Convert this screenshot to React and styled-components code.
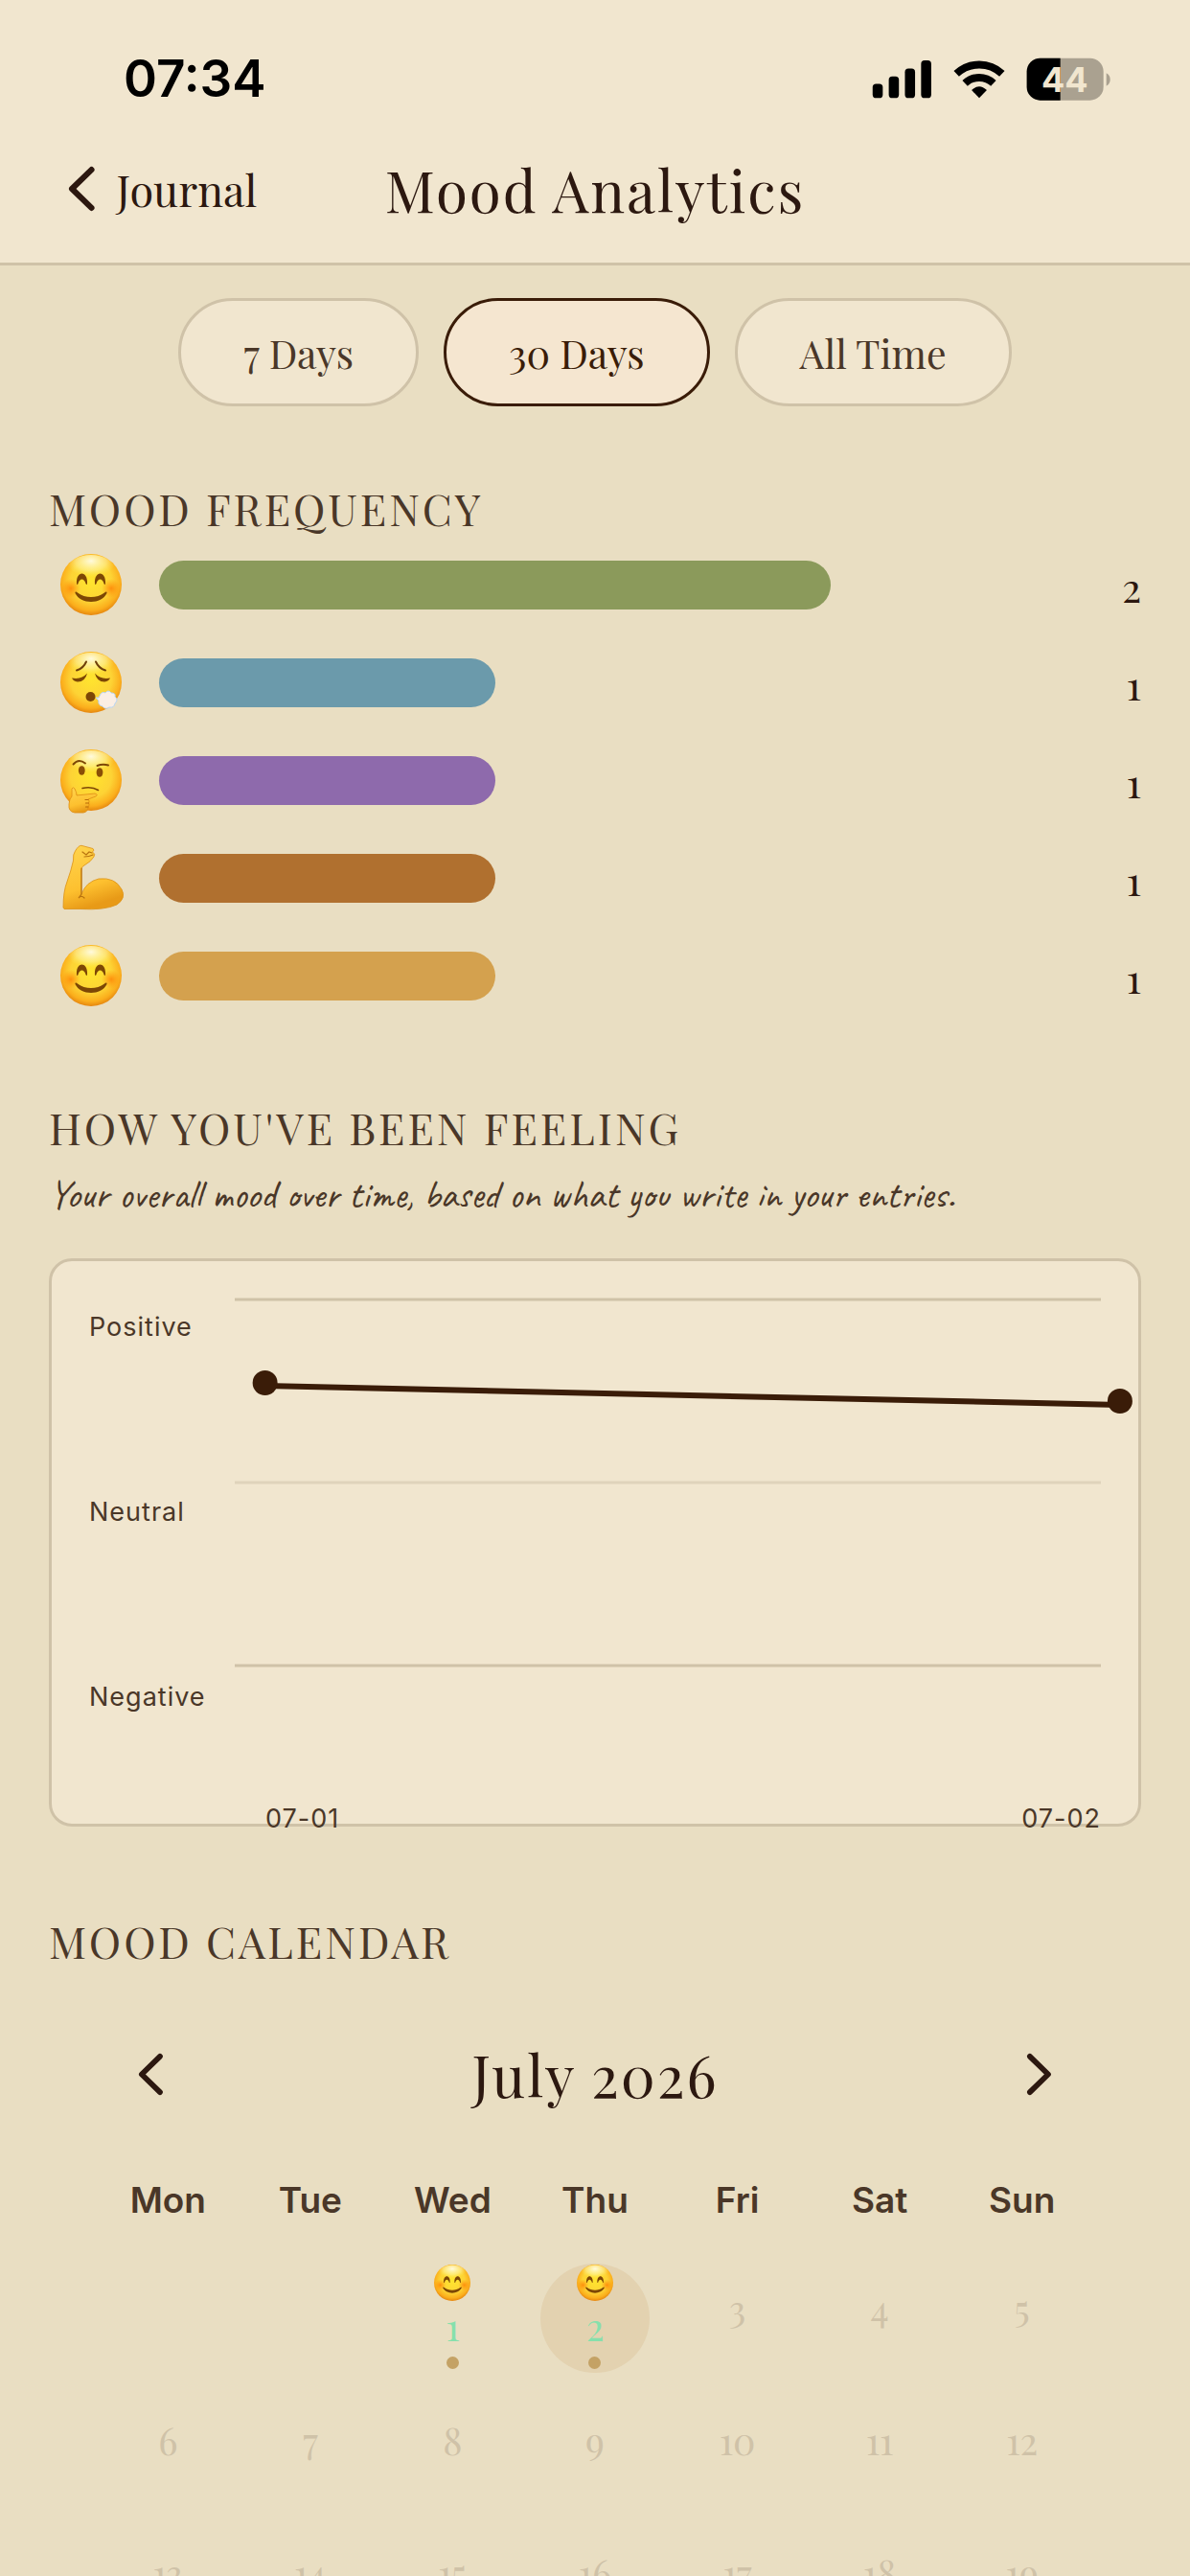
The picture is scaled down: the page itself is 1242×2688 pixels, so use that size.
import React, { useState } from "react"
import styled, { createGlobalStyle, css } from "styled-components"

const serif = `"Playfair Display", "Liberation Serif", serif`
const sans = `Inter, "Liberation Sans", sans-serif`

const colors = {
  page: "#e9dec2",
  surface: "#f1e6cf",
  selected: "#f5e6d0",
  border: "#cfc2a8",
  ink: "#2c1810",
  muted: "#4a3728",
  accent: "#3a1c08",
  today: "#e3d2b0",
  entry: "#86e0ac",
  dot: "#c4a265",
}

const GlobalStyle = createGlobalStyle`
  * {
    box-sizing: border-box;
  }

  body {
    margin: 0;
    background: ${colors.page};
    color: ${colors.ink};
    font-family: ${serif};
  }

  button {
    margin: 0;
    padding: 0;
    border: 0;
    background: none;
    color: inherit;
    font: inherit;
    cursor: pointer;
  }
`

const Screen = styled.div`
  display: flex;
  flex-direction: column;
  height: 100vh;
`

const Header = styled.header`
  flex: none;
  background: ${colors.surface};
  border-bottom: 3px solid ${colors.border};
`

const StatusBar = styled.div`
  display: flex;
  align-items: center;
  justify-content: space-between;
  padding: 54px 82px 0 129px;
  color: #000;
`

const Clock = styled.time`
  font: 600 53px/56px ${sans};
`

const StatusIcons = styled.div`
  display: flex;
  align-items: center;
  gap: 22px;
`

const Nav = styled.nav`
  display: grid;
  grid-template-columns: 1fr auto 1fr;
  align-items: center;
  padding: 47px 72px 37px;
`

const BackLink = styled.a`
  display: flex;
  align-items: center;
  gap: 23px;
  color: inherit;
  text-decoration: none;
  font-size: 45px;
  line-height: 60px;
`

const Title = styled.h1`
  margin: 0;
  font-size: 60px;
  font-weight: 400;
  line-height: 80px;
  letter-spacing: 2px;
`

const Content = styled.main`
  flex: 1;
  min-height: 0;
  padding: 34px 51px;
  overflow-y: auto;
  scrollbar-width: none;
`

const Ranges = styled.div`
  display: flex;
  justify-content: center;
  gap: 26px;
  margin-bottom: 76px;
`

const RangeButton = styled.button(
  ({ $active }) => css`
    height: 113px;
    padding: 0 65px;
    border: 3px solid ${$active ? colors.accent : colors.border};
    border-radius: 60px;
    background: ${$active ? colors.selected : colors.surface};
    color: ${$active ? colors.accent : colors.muted};
    font-size: 41px;
    line-height: 56px;
  `
)

const Section = styled.section`
  margin-bottom: 83px;
`

const SectionTitle = styled.h2`
  margin: 0 0 5px;
  color: ${colors.muted};
  font-size: 45px;
  font-weight: 400;
  line-height: 60px;
  letter-spacing: 3px;
  text-transform: uppercase;
`

const Subtitle = styled.p`
  margin: 17px 0 42px;
  color: ${colors.muted};
  font: 400 41px/48px Caveat, "Liberation Serif", serif;
`

const MoodList = styled.ul`
  display: grid;
  gap: 12px;
  margin: 0;
  padding: 0;
  list-style: none;
`

const MoodRow = styled.li`
  display: flex;
  align-items: center;
  height: 90px;
`

const MoodIcon = styled.span`
  display: flex;
  justify-content: center;
  width: 87px;
  margin-right: 28px;
`

const Track = styled.div`
  flex: 1;
`

const Bar = styled.div(
  ({ $color }) => css`
    height: 51px;
    border-radius: 26px;
    background: ${$color};
  `
)

const Count = styled.span`
  width: 90px;
  padding-top: 3px;
  font-size: 42px;
  line-height: 48px;
  text-align: right;
`

const ChartCard = styled.div`
  display: grid;
  grid-template-columns: 152px 1fr;
  grid-template-rows: 525px 36px;
  height: 593px;
  margin-bottom: 89px;
  padding: 39px;
  border: 3px solid ${colors.border};
  border-radius: 24px;
  background: ${colors.surface};
  color: ${colors.muted};
  font: 400 27px/36px ${sans};
  letter-spacing: 1px;
`

const AxisLabels = styled.div`
  display: grid;
  grid-auto-rows: 193px;
  padding-top: 12px;
`

const Plot = styled.svg`
  width: 100%;
  height: 100%;
  overflow: visible;
`

const Dates = styled.div`
  grid-column: 2;
  display: flex;
  justify-content: space-between;
  padding-left: 32px;
`

const Calendar = styled.div`
  padding: 64px 50px 0;
`

const MonthBar = styled.div`
  display: flex;
  align-items: center;
  justify-content: space-between;
  padding: 0 44px;
`

const Month = styled.h3`
  margin: 0;
  font-size: 60px;
  font-weight: 400;
  line-height: 80px;
  letter-spacing: 2px;
`

const Grid = styled.div`
  display: grid;
  grid-template-columns: repeat(7, 1fr);
  justify-items: center;
  row-gap: 24px;
`

const Weekdays = styled(Grid)`
  margin: 68px 0 42px;
  color: ${colors.muted};
  font: 600 37px/48px ${sans};
`

const Day = styled.button(
  ({ $entry, $today }) => css`
    display: flex;
    flex-direction: column;
    align-items: center;
    gap: 5px;
    width: 114px;
    height: 114px;
    padding-top: ${$entry ? 1 : 25}px;
    border-radius: 50%;
    background: ${$today ? colors.today : "transparent"};
    color: ${$entry ? colors.entry : colors.border};
    font-size: 39px;
    line-height: 42px;
  `
)

const EntryDot = styled.span`
  width: 13px;
  height: 13px;
  margin-top: 6px;
  border-radius: 50%;
  background: ${colors.dot};
`

const Drawing = styled.svg`
  display: block;
  flex: none;
  overflow: visible;
`

function Chevron({ height, right }) {
  return (
    <Drawing width={(height * 26) / 45} height={height} viewBox="0 0 26 45">
      <path
        d={right ? "M3 3L23 22.5L3 42" : "M23 3L3 22.5L23 42"}
        fill="none"
        stroke="currentColor"
        strokeWidth="6"
        strokeLinecap="round"
        strokeLinejoin="round"
      />
    </Drawing>
  )
}

function Signal() {
  return (
    <Drawing width="63" height="41" viewBox="54 64 190 124">
      <rect x="56" y="141" width="32" height="45" rx="11" />
      <rect x="107" y="118" width="32" height="68" rx="11" />
      <rect x="158" y="93" width="32" height="93" rx="11" />
      <rect x="209" y="67" width="32" height="119" rx="11" />
    </Drawing>
  )
}

function Wifi() {
  return (
    <Drawing width="54" height="41" viewBox="311 64 162 124">
      <path
        d="M320 109A105 105 0 0 1 464 109M347 139A66 66 0 0 1 437 139"
        fill="none"
        stroke="#000"
        strokeWidth="24"
      />
      <path d="M392 186L368 161Q392 138 416 161Z" />
    </Drawing>
  )
}

function Battery() {
  return (
    <Drawing width="89" height="45" viewBox="541 58 267 135">
      <clipPath id="charge">
        <rect x="540" y="58" width="108" height="140" />
      </clipPath>
      <rect x="543" y="60" width="240" height="132" rx="42" fill="#aaa190" />
      <rect x="543" y="60" width="240" height="132" rx="42" clipPath="url(#charge)" />
      <path d="M792 107Q804 113 804 127Q804 141 792 147Z" fill="#aaa190" />
      <text
        x="662"
        y="165"
        textAnchor="middle"
        fill={colors.surface}
        fontFamily="Inter, sans-serif"
        fontSize="108"
        fontWeight="700"
      >
        44
      </text>
    </Drawing>
  )
}

function EmojiDefs() {
  return (
    <defs>
      <radialGradient id="skin" cx="50%" cy="44%" r="56%">
        <stop offset="0" stopColor="#ffe52e" />
        <stop offset="0.6" stopColor="#fdd335" />
        <stop offset="0.86" stopColor="#fbae1c" />
        <stop offset="1" stopColor="#e5860f" />
      </radialGradient>
      <radialGradient id="shine" cx="50%" cy="20%" r="80%">
        <stop offset="0" stopColor="#fffef0" stopOpacity="0.9" />
        <stop offset="0.4" stopColor="#fffbb0" stopOpacity="0.5" />
        <stop offset="0.65" stopColor="#fff36b" stopOpacity="0" />
      </radialGradient>
      <radialGradient id="cheek">
        <stop offset="0" stopColor="#ff7a00" stopOpacity="0.75" />
        <stop offset="1" stopColor="#ff8a00" stopOpacity="0" />
      </radialGradient>
      <linearGradient id="hand" x1="0" y1="0" x2="0.3" y2="1">
        <stop offset="0" stopColor="#ffd54f" />
        <stop offset="0.7" stopColor="#fdc02f" />
        <stop offset="1" stopColor="#e89a17" />
      </linearGradient>
    </defs>
  )
}

function Face({ size, label, children }) {
  return (
    <Drawing width={size} height={size} viewBox="0 0 64 64" role="img" aria-label={label}>
      <circle cx="32" cy="32" r="32" fill="url(#skin)" />
      <ellipse cx="32" cy="17" rx="25" ry="16" fill="url(#shine)" />
      {children}
    </Drawing>
  )
}

function Smile({ size = 64 }) {
  return (
    <Face size={size} label="Happy">
      <circle cx="11" cy="36" r="10" fill="url(#cheek)" />
      <circle cx="53" cy="36" r="10" fill="url(#cheek)" />
      <g fill="#7d4705">
        <path d="M17 31C16 17 29 17 28 31Q27.500 33 26.500 31C25 25 20 25 18.500 31Q17.500 33 17 31Z" />
        <path d="M36 31C35 17 48 17 47 31Q46.500 33 45.500 31C44 25 39 25 37.500 31Q36.500 33 36 31Z" />
        <path d="M15.500 41C15 39.500 16.500 39 18 40.500C26 46.500 38 46.500 46 40.500C47.500 39 49 39.500 48.500 41C43 53 21 53 15.500 41Z" />
      </g>
    </Face>
  )
}

function Exhale() {
  return (
    <Face size={64} label="Relieved">
      <g fill="none" stroke="#70410a" strokeWidth="2" strokeLinecap="round">
        <path d="M17 19.500Q24 17.500 27 10.500" />
        <path d="M47 19.500Q40 17.500 37 10.500" />
      </g>
      <g fill="#7d4705">
        <path d="M12 27.500Q22 29.500 28 22.500Q26 31.500 18 31.500Q13.500 31 12 27.500Z" />
        <path d="M52 27.500Q42 29.500 36 22.500Q38 31.500 46 31.500Q50.500 31 52 27.500Z" />
        <circle cx="31.500" cy="47" r="5" />
      </g>
      <g fill="#fbeee3" stroke="#b9d6f5" strokeWidth="1">
        <path d="M37 48Q41 49 41 46Q43 41 47 43Q50 39 53 43Q58 43 57 47Q61 50 57 54Q56 59 51 58Q47 61 44 57Q39 56 40 51Z" />
      </g>
    </Face>
  )
}

function Thinking() {
  return (
    <Face size={64} label="Thoughtful">
      <g fill="none" stroke="#7d4705" strokeWidth="2" strokeLinecap="round">
        <path d="M13.500 15.500Q19 9 26 14.500" />
        <path d="M38.500 17Q44 15 50 16.500" />
        <path d="M23 40.500Q33 38.500 39.500 42.500" strokeWidth="1.500" />
      </g>
      <ellipse cx="22.300" cy="22" rx="3.400" ry="4.800" fill="#8a4f06" />
      <ellipse cx="41" cy="24" rx="3.400" ry="4.800" fill="#8a4f06" />
      <path
        d="M12 41Q13 38.500 15 41Q17 45 17 48L36 46Q40 47 37 49L29 52Q31 54 29.500 56Q31 58 29 60Q29 65 24 66H15Q8 65 9 57Q9.500 51 12 49Z"
        fill="url(#hand)"
        stroke="#dd8c13"
        strokeWidth="0.800"
      />
      <path
        d="M29 52.500H26M29.500 56H26.500M29 60H26.500"
        stroke="#b86a08"
        strokeWidth="1.200"
        strokeLinecap="round"
      />
    </Face>
  )
}

function Muscle() {
  return (
    <Drawing width={64} height={64} viewBox="0 0 64 64" role="img" aria-label="Strong">
      <path
        d="M3 63Q3 46 7 36Q11 25 13.500 14Q13 7 15.500 4Q19 -2 22 -1.700L34 1.500Q36 3 33.500 5Q37 7 35 10Q32 15 25 19Q22 20 22 24V49Q27 36 40 33Q57 31 64 44Q69 53 59 60Q46 66 21 64.500L4 64.500Z"
        fill="url(#hand)"
        stroke="#dc9216"
        strokeWidth="0.800"
      />
      <path
        d="M22 22V49L19 53Q22 50 25 53M23 5L27 8L30 5L33 6M25 10Q30 10 34 8"
        fill="none"
        stroke="#b8730f"
        strokeWidth="1.200"
        strokeLinecap="round"
      />
    </Drawing>
  )
}

const ranges = ["7 Days", "30 Days", "All Time"]

const moods = [
  { Icon: Smile, color: "#8b9a5b", count: 2 },
  { Icon: Exhale, color: "#6b9aab", count: 1 },
  { Icon: Thinking, color: "#8e6aac", count: 1 },
  { Icon: Muscle, color: "#b0702f", count: 1 },
  { Icon: Smile, color: "#d4a14e", count: 1 },
]

const weekdays = ["Mon", "Tue", "Wed", "Thu", "Fri", "Sat", "Sun"]
const days = Array.from({ length: 31 }, (_, i) => i + 1)
const entries = [1, 2]
const today = 2

// a single entry fills this share of the track
const BAR_STEP = 37.5

export default function App() {
  const [range, setRange] = useState("30 Days")

  return (
    <Screen>
      <GlobalStyle />
      <Header>
        <StatusBar>
          <Clock>07:34</Clock>
          <StatusIcons>
            <Signal />
            <Wifi />
            <Battery />
          </StatusIcons>
        </StatusBar>
        <Nav>
          <BackLink href="#journal">
            <Chevron height={46} />
            Journal
          </BackLink>
          <Title>Mood Analytics</Title>
        </Nav>
      </Header>

      <Content>
        <Ranges>
          {ranges.map((name) => (
            <RangeButton
              key={name}
              type="button"
              aria-pressed={name === range}
              $active={name === range}
              onClick={() => setRange(name)}
            >
              {name}
            </RangeButton>
          ))}
        </Ranges>

        <Section>
          <SectionTitle>Mood Frequency</SectionTitle>
          <MoodList>
            {moods.map(({ Icon, color, count }) => (
              <MoodRow key={color}>
                <MoodIcon>
                  <Icon />
                </MoodIcon>
                <Track>
                  <Bar $color={color} style={{ width: `${count * BAR_STEP}%` }} />
                </Track>
                <Count>{count}</Count>
              </MoodRow>
            ))}
          </MoodList>
        </Section>

        <Section>
          <SectionTitle>How you've been feeling</SectionTitle>
          <Subtitle>
            Your overall mood over time, based on what you write in your entries.
          </Subtitle>
          <ChartCard>
            <AxisLabels>
              <span>Positive</span>
              <span>Neutral</span>
              <span>Negative</span>
            </AxisLabels>
            <Plot>
              <g stroke={colors.border} strokeWidth="3">
                <line x1="0" y1="1" x2="100%" y2="1" />
                <line x1="0" y1="192" x2="100%" y2="192" opacity="0.5" />
                <line x1="0" y1="383" x2="100%" y2="383" />
              </g>
              <line
                x1="3.5%"
                y1="91"
                x2="102.2%"
                y2="111"
                stroke={colors.accent}
                strokeWidth="6"
              />
              <circle cx="3.5%" cy="88" r="13" fill={colors.accent} />
              <circle cx="102.2%" cy="107" r="13" fill={colors.accent} />
            </Plot>
            <Dates>
              <span>07-01</span>
              <span>07-02</span>
            </Dates>
          </ChartCard>
        </Section>

        <Section>
          <SectionTitle>Mood Calendar</SectionTitle>
          <Calendar>
            <MonthBar>
              <button type="button" aria-label="Previous month">
                <Chevron height={43} />
              </button>
              <Month>July 2026</Month>
              <button type="button" aria-label="Next month">
                <Chevron height={43} right />
              </button>
            </MonthBar>
            <Weekdays>
              {weekdays.map((name) => (
                <span key={name}>{name}</span>
              ))}
            </Weekdays>
            <Grid>
              <span />
              <span />
              {days.map((day) => {
                const entry = entries.includes(day)
                return (
                  <Day key={day} type="button" $entry={entry} $today={day === today}>
                    {entry && <Smile size={38} />}
                    <span>{day}</span>
                    {entry && <EntryDot />}
                  </Day>
                )
              })}
            </Grid>
          </Calendar>
        </Section>
      </Content>

      <svg width="0" height="0" aria-hidden="true">
        <EmojiDefs />
      </svg>
    </Screen>
  )
}
